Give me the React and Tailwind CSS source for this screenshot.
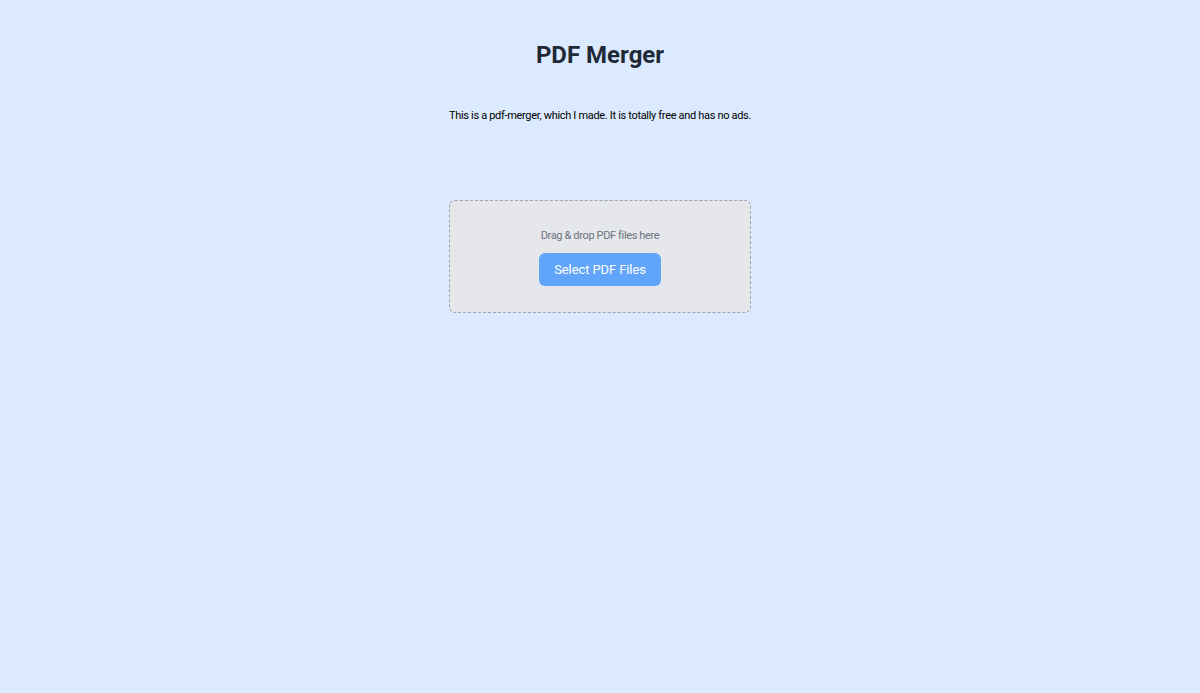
import React, { useRef, useState } from 'react';

export default function App() {
  const inputRef = useRef(null);
  const [files, setFiles] = useState([]);

  const addFiles = (list) => {
    const pdfs = Array.from(list || []).filter(f => f.type === 'application/pdf');
    if (pdfs.length) setFiles(prev => [...prev, ...pdfs]);
  };

  return (
    <div className="min-h-screen bg-[#dbeafe] font-['Roboto',sans-serif] flex flex-col items-center">
      <h1 className="mt-[39px] text-2xl font-bold text-[#1f2937] leading-8">PDF Merger</h1>
      <p className="mt-[38px] text-[11px] tracking-[-0.32px] text-black leading-[14px]">
        This is a pdf-merger, which I made. It is totally free and has no ads.
      </p>

      {/* drop zone */}
      <div
        className="mt-[77px] w-[302px] h-[113px] rounded-md border-[1.5px] border-dashed border-[#9ca3af] bg-[#e5e7eb] flex flex-col items-center pt-[28px]"
        onDragOver={(e) => e.preventDefault()}
        onDrop={(e) => { e.preventDefault(); addFiles(e.dataTransfer.files); }}
      >
        <p className="text-[11px] tracking-[-0.36px] text-[#6b7280] leading-[14px]">Drag &amp; drop PDF files here</p>
        <button
          onClick={() => inputRef.current && inputRef.current.click()}
          className="mt-[10px] h-[33px] w-[122px] rounded-md bg-[#60a5fa] text-white text-[13px] tracking-[-0.1px]"
        >
          Select PDF Files
        </button>
        <input
          ref={inputRef}
          type="file"
          accept="application/pdf"
          multiple
          className="hidden"
          onChange={(e) => addFiles(e.target.files)}
        />
      </div>

      {files.length > 0 && (
        <ul className="mt-4 w-[302px] text-xs text-[#374151]">
          {files.map((f, i) => <li key={i}>{f.name}</li>)}
        </ul>
      )}
    </div>
  );
}
